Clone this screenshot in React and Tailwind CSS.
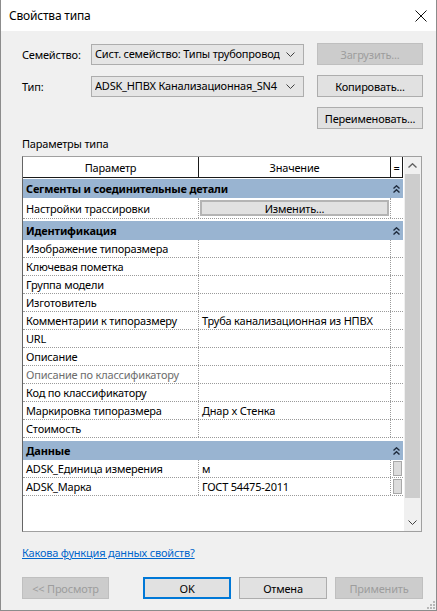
import React from 'react';

function ChevronDown({ className = '' }) {
  return (
    <svg width="9" height="5" viewBox="0 0 9 5" className={className}>
      <polyline points="0.5,0.5 4.5,4.5 8.5,0.5" fill="none" stroke="#404040" strokeWidth="1" />
    </svg>
  );
}

function DoubleUp() {
  return (
    <svg width="7" height="8" viewBox="0 0 7 8">
      <polyline points="0.5,3.5 3.5,0.8 6.5,3.5" fill="none" stroke="#1e2a3c" strokeWidth="1.4" />
      <polyline points="0.5,7.5 3.5,4.8 6.5,7.5" fill="none" stroke="#1e2a3c" strokeWidth="1.4" />
    </svg>
  );
}

function Combo({ children }) {
  return (
    <div className="w-[213px] h-[21px] bg-[#e5e5e5] border border-[#adadad] flex items-center pl-[3px] pr-[8px]">
      <span className="flex-1 overflow-hidden whitespace-nowrap leading-[16px]">{children}</span>
      <ChevronDown className="ml-[6px] shrink-0" />
    </div>
  );
}

function Btn({ children, disabled, primary, className = '' }) {
  const base = 'h-[22px] flex items-center justify-center border';
  const look = disabled
    ? 'bg-[#cccccc] border-[#bfbfbf] text-[#9d9d9d]'
    : primary
    ? 'bg-[#e1e1e1] border-2 border-[#0078d7] text-black'
    : 'bg-[#e1e1e1] border-[#adadad] text-black';
  return <div className={`${base} ${look} ${className}`}>{children}</div>;
}

function Section({ title, mt }) {
  return (
    <div className={`${mt} h-[19px] w-[380px] bg-[#99b4d1] flex items-center font-bold pl-[3px] pr-[3px]`}>
      <span className="flex-1">{title}</span>
      <DoubleUp />
    </div>
  );
}

function Row({ name, value, gray, eqBtn, tall, children }) {
  return (
    <div className={`${tall ? 'h-[21px]' : 'h-[18px]'} w-[380px] flex border-b border-dotted border-[#9a9a9a]`}>
      <div className={`w-[176px] shrink-0 border-r border-dotted border-[#9a9a9a] pl-[3px] flex items-center whitespace-nowrap overflow-hidden ${gray ? 'text-[#6d6d6d]' : ''}`}>
        {name}
      </div>
      <div className="w-[192px] shrink-0 border-r border-dotted border-[#9a9a9a] pl-[3px] flex items-center whitespace-nowrap overflow-hidden">
        {children || value}
      </div>
      <div className="w-[12px] shrink-0 flex items-center justify-start pl-[2px]">
        {eqBtn && <div className="w-[9px] h-[15px] bg-[#dcdcdc] border border-[#a8a8a8]" />}
      </div>
    </div>
  );
}

export default function App() {
  const ident = [
    ['Изображение типоразмера', ''],
    ['Ключевая пометка', ''],
    ['Группа модели', ''],
    ['Изготовитель', ''],
    ['Комментарии к типоразмеру', 'Труба канализационная из НПВХ'],
    ['URL', ''],
    ['Описание', ''],
    ['Описание по классификатору', '', true],
    ['Код по классификатору', ''],
    ['Маркировка типоразмера', 'Днар x Стенка'],
    ['Стоимость', ''],
  ];

  return (
    <div className="w-[437px] h-[611px] border-x border-b border-[#8c8c8c] flex flex-col font-['Noto_Sans',sans-serif] text-[11px] tracking-[-0.2px] text-black leading-none">
      {/* title bar */}
      <div className="h-[31px] bg-white flex items-center justify-between pl-[8px] pr-[9px] shrink-0">
        <span className="text-[12px]">Свойства типа</span>
        <svg width="12" height="12" viewBox="0 0 12 12">
          <line x1="0.5" y1="0.5" x2="11.5" y2="11.5" stroke="#111" strokeWidth="1" />
          <line x1="11.5" y1="0.5" x2="0.5" y2="11.5" stroke="#111" strokeWidth="1" />
        </svg>
      </div>

      <div className="flex-1 bg-[#f0f0f0] pl-[21px] pr-[13px] flex flex-col relative">
        {/* family */}
        <div className="mt-[12px] flex items-center">
          <span className="w-[69px]">Семейство:</span>
          <Combo>Сист. семейство: Типы трубопроводов</Combo>
          <Btn disabled className="ml-[13px] w-[106px]">Загрузить...</Btn>
        </div>
        {/* type */}
        <div className="mt-[10px] flex items-center">
          <span className="w-[69px]">Тип:</span>
          <Combo>ADSK_НПВХ Канализационная_SN4</Combo>
          <Btn className="ml-[13px] w-[106px]">Копировать...</Btn>
        </div>
        <div className="mt-[10px] flex justify-end">
          <Btn className="w-[106px]">Переименовать...</Btn>
        </div>

        <div className="mt-[8px] h-[12px] flex items-center">Параметры типа</div>

        {/* table */}
        <div className="mt-[7px] w-[400px] h-[376px] bg-white border border-[#a0a0a0] border-l-[#646464] flex">
          <div className="w-[380px] flex flex-col">
            <div className="h-[21px] flex border-b border-[#1a1a1a]">
              <div className="w-[176px] border-r border-[#1a1a1a] flex items-center justify-center">Параметр</div>
              <div className="w-[192px] border-r border-[#1a1a1a] flex items-center justify-center">Значение</div>
              <div className="w-[12px] border-r border-[#1a1a1a] flex items-center justify-center">=</div>
            </div>

            <Section title="Сегменты и соединительные детали" mt="mt-[1px]" />
            <Row name="Настройки трассировки" tall>
              <div className="w-[189px] h-[16px] -ml-[2px] bg-[#e1e1e1] border-2 border-[#b4b4b4] flex items-center justify-center">
                Изменить...
              </div>
            </Row>

            <Section title="Идентификация" mt="mt-[2px]" />
            {ident.map(([n, v, g]) => (
              <Row key={n} name={n} value={v} gray={g} />
            ))}

            <Section title="Данные" mt="mt-[3px]" />
            <Row name="ADSK_Единица измерения" value="м" eqBtn />
            <Row name="ADSK_Марка" value="ГОСТ 54475-2011" eqBtn />
          </div>

          {/* scrollbar */}
          <div className="ml-[1px] w-[17px] bg-[#f0f0f0] flex flex-col items-center">
            <div className="h-[17px] flex items-center justify-center">
              <svg width="9" height="5" viewBox="0 0 9 5">
                <polyline points="0.5,4.5 4.5,0.8 8.5,4.5" fill="none" stroke="#606060" strokeWidth="1.4" />
              </svg>
            </div>
            <div className="w-[15px] h-[324px] bg-[#cdcdcd]" />
            <div className="flex-1" />
            <div className="h-[17px] flex items-center justify-center">
              <ChevronDown />
            </div>
          </div>
        </div>

        <div className="mt-[13px] h-[14px] flex items-center">
          <span className="text-[#0066cc] underline">Какова функция данных свойств?</span>
        </div>

        <div className="mt-[18px] flex">
          <Btn disabled className="w-[87px]">&lt;&lt; Просмотр</Btn>
          <Btn primary className="ml-[34px] w-[88px]">OK</Btn>
          <Btn className="ml-[8px] w-[88px]">Отмена</Btn>
          <Btn disabled className="ml-[8px] w-[88px]">Применить</Btn>
        </div>

        {/* resize grip */}
        <svg width="8" height="8" viewBox="0 0 8 8" className="absolute right-[1px] bottom-[1px]">
          <rect x="6" y="0" width="2" height="2" fill="#b8b8b8" />
          <rect x="3" y="3" width="2" height="2" fill="#b8b8b8" />
          <rect x="6" y="3" width="2" height="2" fill="#b8b8b8" />
          <rect x="0" y="6" width="2" height="2" fill="#b8b8b8" />
          <rect x="3" y="6" width="2" height="2" fill="#b8b8b8" />
          <rect x="6" y="6" width="2" height="2" fill="#b8b8b8" />
        </svg>
      </div>
    </div>
  );
}
